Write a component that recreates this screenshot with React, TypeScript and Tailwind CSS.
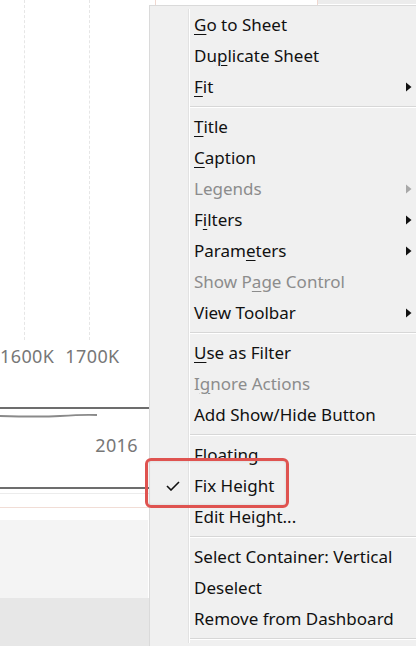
import type { ReactNode } from "react"

type Item =
  | { kind: "sep" }
  | { kind: "item"; label: ReactNode; disabled?: boolean; sub?: boolean; checked?: boolean }

const U = ({ children }: { children: ReactNode }) => (
  <span className="underline decoration-1 underline-offset-[3px]">{children}</span>
)

const items: Item[] = [
  { kind: "item", label: <><U>G</U>o to Sheet</> },
  { kind: "item", label: <>Du<U>p</U>licate Sheet</> },
  { kind: "item", label: <><U>F</U>it</>, sub: true },
  { kind: "sep" },
  { kind: "item", label: <><U>T</U>itle</> },
  { kind: "item", label: <><U>C</U>aption</> },
  { kind: "item", label: "Legends", disabled: true, sub: true },
  { kind: "item", label: <>F<U>i</U>lters</>, sub: true },
  { kind: "item", label: <>Param<U>e</U>ters</>, sub: true },
  { kind: "item", label: <>Show P<U>a</U>ge Control</>, disabled: true },
  { kind: "item", label: "View Toolbar", sub: true },
  { kind: "sep" },
  { kind: "item", label: <><U>U</U>se as Filter</> },
  { kind: "item", label: <>I<U>g</U>nore Actions</>, disabled: true },
  { kind: "item", label: "Add Show/Hide Button" },
  { kind: "sep" },
  { kind: "item", label: "Floating" },
  { kind: "item", label: "Fix Height", checked: true },
  { kind: "item", label: "Edit Height..." },
  { kind: "sep" },
  { kind: "item", label: "Select Container: Vertical" },
  { kind: "item", label: "Deselect" },
  { kind: "item", label: "Remove from Dashboard" },
  { kind: "sep" },
]

const Arrow = ({ disabled }: { disabled?: boolean }) => (
  <svg width="6" height="10" viewBox="0 0 6 10">
    <path d="M0 0.5 L5.5 5 L0 9.5 Z" fill={disabled ? "#a8a8a8" : "#111"} />
  </svg>
)

const Gutter = ({ children }: { children?: ReactNode }) => (
  <div className="w-[39px] shrink-0 self-stretch flex items-center justify-center border-r border-[#e2e2e2] shadow-[1px_0_0_#ffffff] pl-[8px]">
    {children}
  </div>
)

const ContextMenu = () => (
  <div className="absolute left-[149px] top-[5px] w-[290px] bg-[#f0f0f0] border border-[#dadada] pt-[3px] pb-[20px] text-[17px] leading-none font-['Noto_Sans',sans-serif]">
    {items.map((it, i) =>
      it.kind === "sep" ? (
        <div key={i} className="flex h-[9px]">
          <Gutter />
          <div className="flex-1 flex items-center pl-[1px]">
            <div className="w-full border-t border-[#d7d7d7] border-b border-b-white" />
          </div>
        </div>
      ) : (
        <div key={i} className="flex h-[31px]">
          <Gutter>
            {it.checked && (
              <svg width="14" height="10" viewBox="0 0 14 10">
                <path d="M1 5 L5 9 L13 1" fill="none" stroke="#111" strokeWidth="1.6" />
              </svg>
            )}
          </Gutter>
          <div className={"flex-1 flex items-center pl-[5px] " + (it.disabled ? "text-[#8c8c8c]" : "text-[#111]")}>
            <span className="w-[212px] whitespace-nowrap">{it.label}</span>
            {it.sub && <Arrow disabled={it.disabled} />}
          </div>
        </div>
      )
    )}
  </div>
)

const Backdrop = () => (
  <div className="w-[416px] h-[646px] flex flex-col font-['Noto_Sans',sans-serif]">
    <div className="h-[340px] shrink-0 flex">
      <div className="w-[25px] border-r border-dashed border-[#e6e6e6]" />
      <div className="w-[65px] border-r border-dashed border-[#e6e6e6]" />
    </div>
    <div className="h-[32px] shrink-0 flex items-center gap-[11px] text-[18px] tracking-[0.4px] text-[#777]">
      <span>1600K</span>
      <span>1700K</span>
    </div>
    <div className="h-[37px] shrink-0 w-[149px] flex flex-col justify-end">
      <div className="h-[2px] bg-[#6d6d6d]" />
    </div>
    <svg width="149" height="10" viewBox="0 0 149 10" className="block shrink-0">
      <path d="M0 7 C20 7.5 40 8 60 7 C75 6 85 5.5 97 6" fill="none" stroke="#8a8a8a" strokeWidth="1.8" />
    </svg>
    <div className="h-[52px] shrink-0 w-[149px] flex items-center justify-end pr-[11px] text-[18px] tracking-[0.4px] text-[#777]">2016</div>
    <div className="h-[16px] shrink-0" />
    <div className="w-[149px] h-[2px] shrink-0 bg-[#6d6d6d]" />
    <div className="w-[149px] h-[5px] shrink-0 border-b border-[#ececec]" />
    <div className="w-[149px] h-[14px] shrink-0 border-b border-[#f1ddd6]" />
    <div className="w-[149px] h-[12px] shrink-0 bg-white" />
    <div className="w-[148px] h-[78px] shrink-0 bg-[#f4f4f4]" />
    <div className="flex-1 bg-[#e7e7e7]" />
  </div>
)

export default function App() {
  return (
    <div className="relative w-[416px] h-[646px] overflow-hidden bg-white">
      <Backdrop />
      <div className="absolute left-[155px] top-0 h-[5px] w-px bg-[#f0d8d0]" />
      <div className="absolute left-[317px] top-0 h-[5px] w-px bg-[#f0d8d0]" />
      <div className="absolute left-[318px] top-0 h-[4px] right-0 bg-[#ececec]" />
      <ContextMenu />
      <div className="absolute left-[145px] top-[458px] w-[144px] h-[50px] rounded-[6px] border-[3px] border-[#df5350] shadow-[inset_0_0_3px_rgba(0,0,0,0.12)]" />
    </div>
  )
}
